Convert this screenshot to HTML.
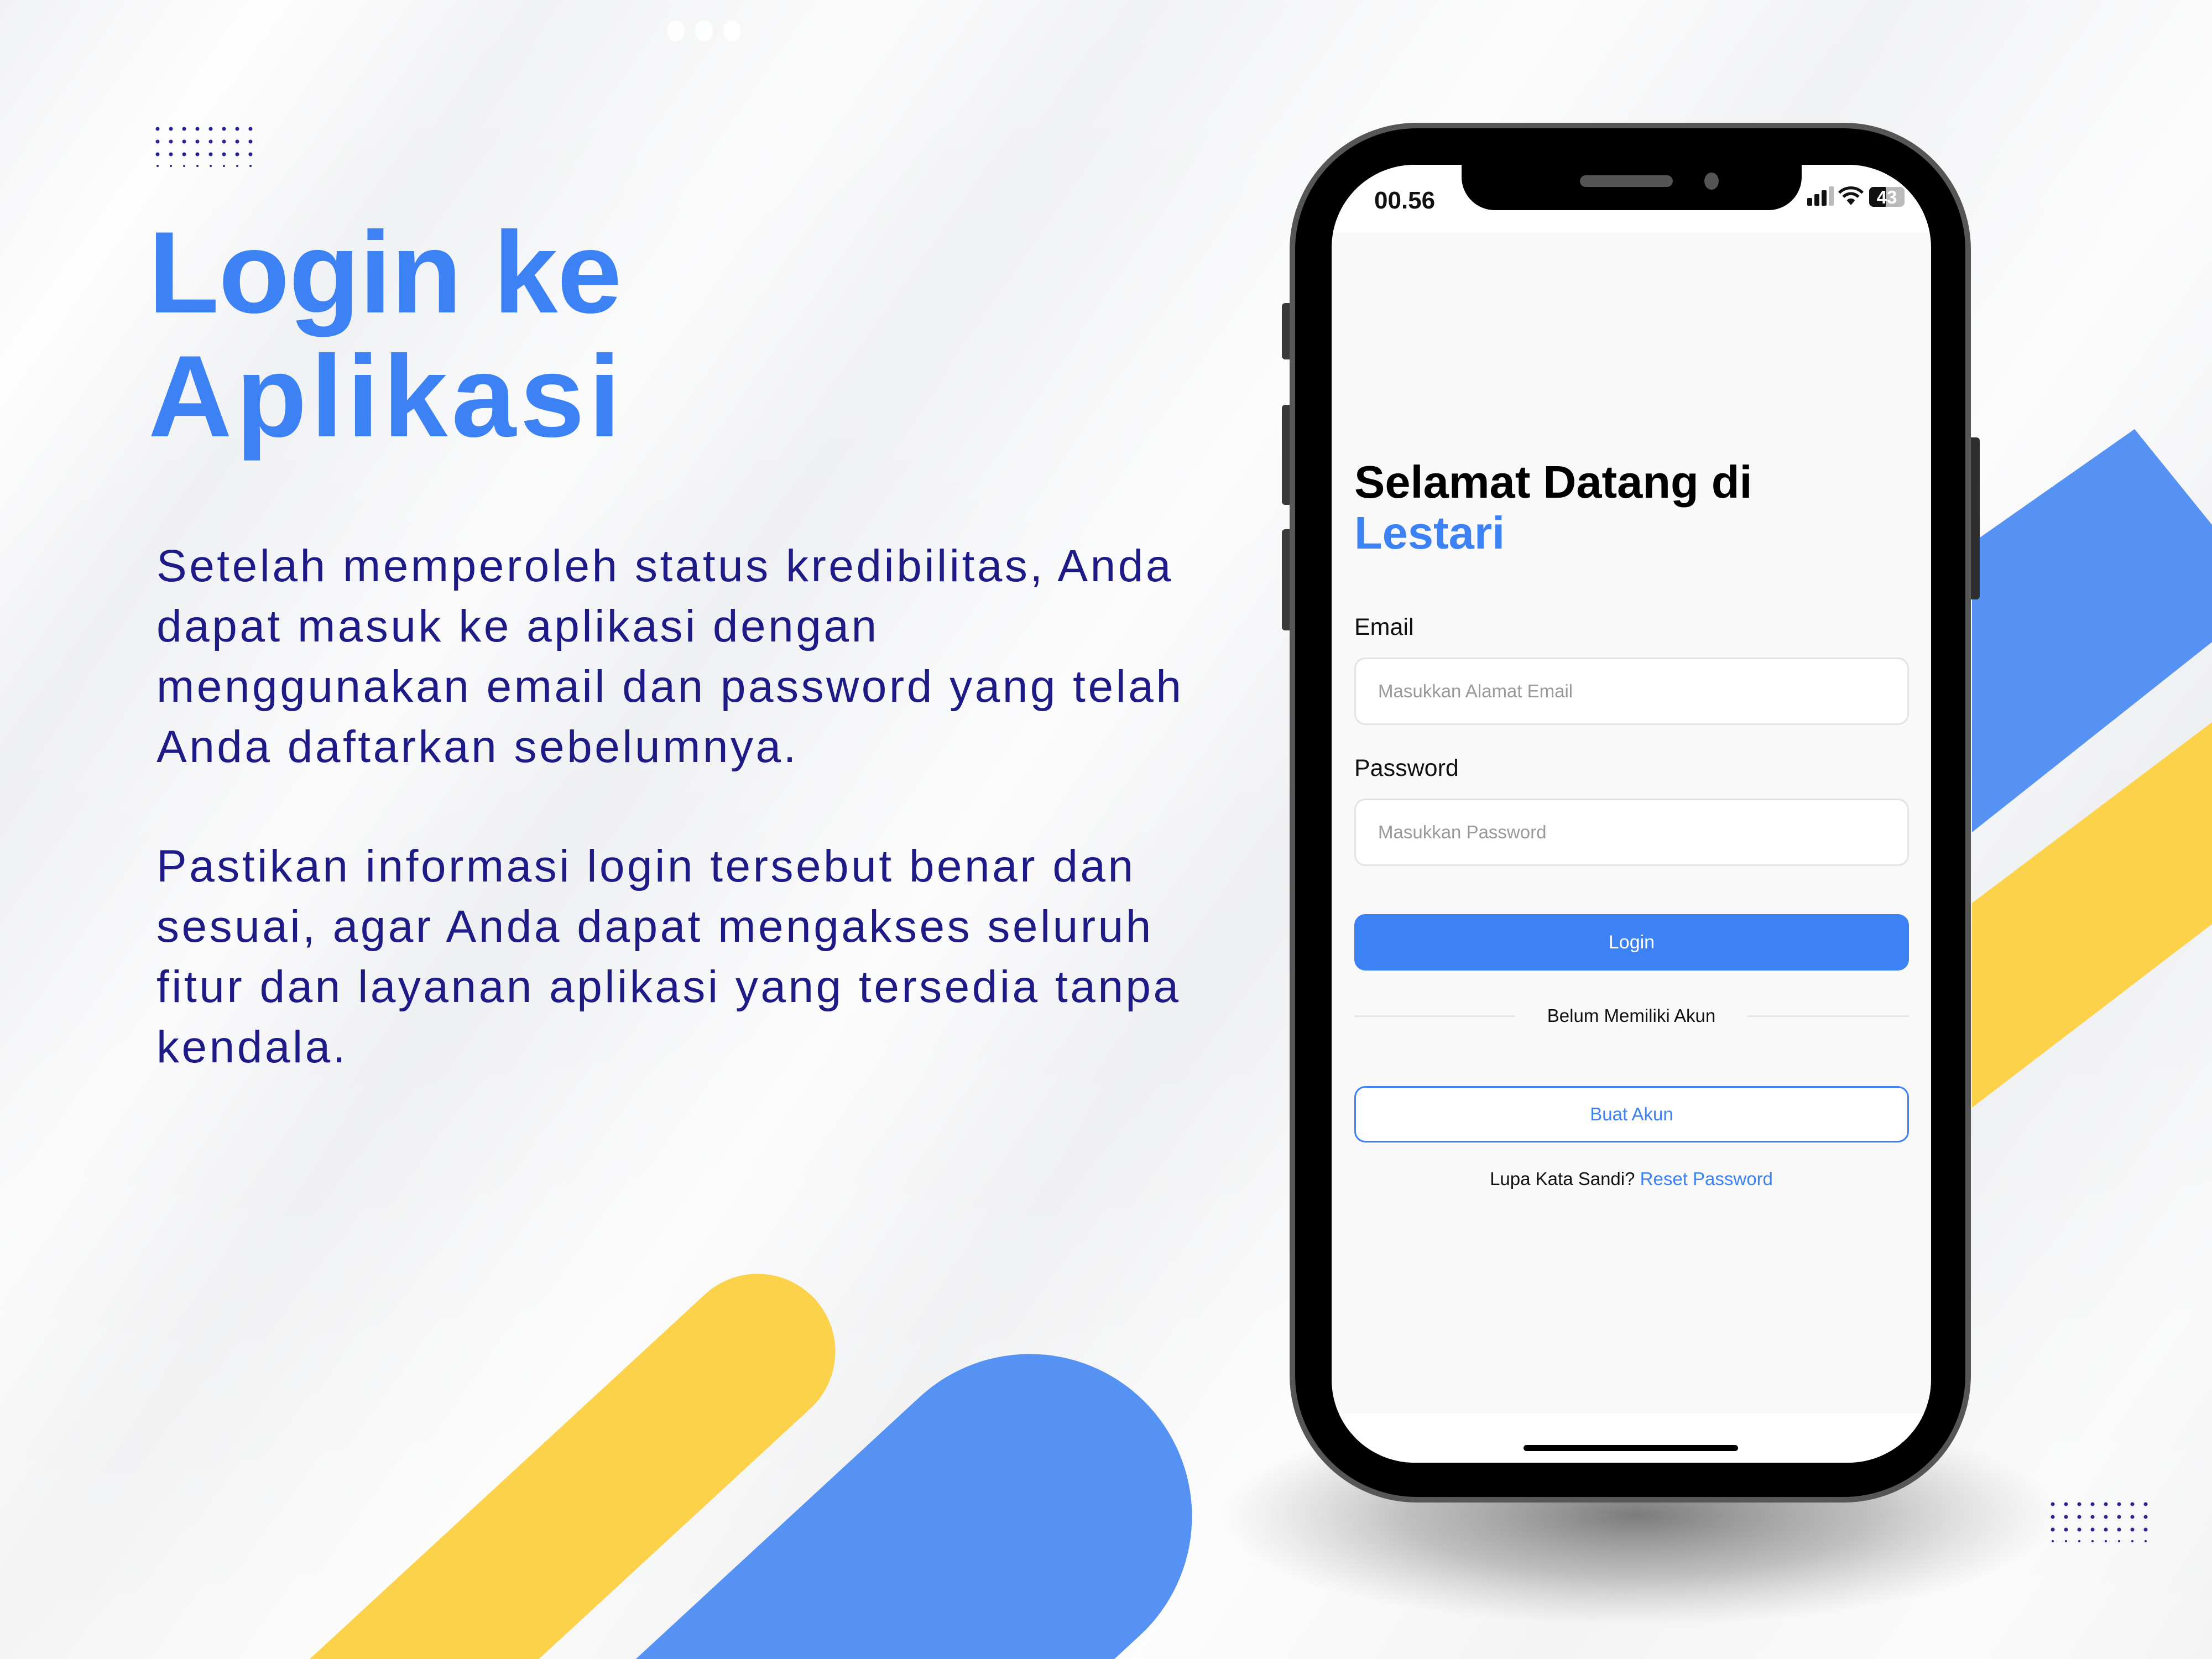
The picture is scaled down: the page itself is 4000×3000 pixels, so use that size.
<!DOCTYPE html>
<html><head><meta charset="utf-8">
<style>
*{margin:0;padding:0;box-sizing:border-box}
html,body{width:4000px;height:3000px;overflow:hidden}
body{position:relative;font-family:"Liberation Sans",sans-serif;
background:
linear-gradient(125deg,rgba(255,255,255,0) 0%,rgba(255,255,255,.9) 8%,rgba(255,255,255,0) 16%,rgba(255,255,255,.7) 26%,rgba(255,255,255,0) 34%,rgba(255,255,255,.8) 46%,rgba(255,255,255,0) 56%,rgba(255,255,255,.8) 68%,rgba(255,255,255,0) 80%,rgba(255,255,255,.6) 92%,rgba(255,255,255,0) 100%),
linear-gradient(180deg,#f1f2f4 0%,#eeeff2 60%,#f4f4f4 100%);}
.abs{position:absolute}
.title{left:268px;font-weight:bold;font-size:210px;color:#3d82f4;line-height:1;letter-spacing:-1px;white-space:nowrap}
.body{left:283px;font-size:82px;line-height:109px;color:#1e1a86;letter-spacing:4.5px;white-space:nowrap}
.screen{font-family:"Liberation Sans",sans-serif}
</style></head><body>

<svg class="abs" style="left:0;top:0" width="4000" height="3000">
 <defs>
  <radialGradient id="sh" cx="50%" cy="50%" r="50%">
   <stop offset="0" stop-color="#666" stop-opacity=".85"/>
   <stop offset=".55" stop-color="#888" stop-opacity=".5"/>
   <stop offset="1" stop-color="#aaa" stop-opacity="0"/>
  </radialGradient>
  <g id="dg" fill="#2a2590">
   <circle cx="0" cy="0" r="3.5"/><circle cx="24" cy="0" r="3.5"/><circle cx="48" cy="0" r="3.5"/><circle cx="72" cy="0" r="3.5"/><circle cx="96" cy="0" r="3.5"/><circle cx="120" cy="0" r="3.5"/><circle cx="144" cy="0" r="3.5"/><circle cx="168" cy="0" r="3.5"/>
   <circle cx="0" cy="23" r="3.5"/><circle cx="24" cy="23" r="3.5"/><circle cx="48" cy="23" r="3.5"/><circle cx="72" cy="23" r="3.5"/><circle cx="96" cy="23" r="3.5"/><circle cx="120" cy="23" r="3.5"/><circle cx="144" cy="23" r="3.5"/><circle cx="168" cy="23" r="3.5"/>
   <circle cx="0" cy="46" r="3.5"/><circle cx="24" cy="46" r="3.5"/><circle cx="48" cy="46" r="3.5"/><circle cx="72" cy="46" r="3.5"/><circle cx="96" cy="46" r="3.5"/><circle cx="120" cy="46" r="3.5"/><circle cx="144" cy="46" r="3.5"/><circle cx="168" cy="46" r="3.5"/>
   <circle cx="0" cy="67" r="2"/><circle cx="24" cy="67" r="2"/><circle cx="48" cy="67" r="2"/><circle cx="72" cy="67" r="2"/><circle cx="96" cy="67" r="2"/><circle cx="120" cy="67" r="2"/><circle cx="144" cy="67" r="2"/><circle cx="168" cy="67" r="2"/>
  </g>
 </defs>
 <polygon points="3566,982 3860,776 4000,949 4000,1161 3566,1505" fill="#5592f3"/>
 <polygon points="3566,1633 4000,1306 4000,1671 3566,2003" fill="#fbd24a"/>
 <line x1="1370" y1="2444" x2="-230" y2="3920" stroke="#fbd24a" stroke-width="281" stroke-linecap="round"/>
 <line x1="1862" y1="2742" x2="900" y2="3630" stroke="#5592f3" stroke-width="587" stroke-linecap="round"/>
 <ellipse cx="2960" cy="2740" rx="760" ry="200" fill="url(#sh)"/>
 <ellipse cx="1222" cy="56" rx="16" ry="19" fill="#fff" opacity=".9"/>
 <ellipse cx="1273" cy="56" rx="16" ry="19" fill="#fff" opacity=".9"/>
 <ellipse cx="1324" cy="56" rx="16" ry="19" fill="#fff" opacity=".9"/>
 <use href="#dg" x="285" y="233"/>
 <use href="#dg" x="3712" y="2720"/>
</svg>

<div class="abs title" style="top:388px">Login ke</div>
<div class="abs title" style="top:612px;letter-spacing:7px">Aplikasi</div>

<div class="abs body" style="top:969px">Setelah memperoleh status kredibilitas, Anda<br>dapat masuk ke aplikasi dengan<br>menggunakan email dan password yang telah<br>Anda daftarkan sebelumnya.</div>
<div class="abs body" style="top:1512px">Pastikan informasi login tersebut benar dan<br>sesuai, agar Anda dapat mengakses seluruh<br>fitur dan layanan aplikasi yang tersedia tanpa<br>kendala.</div>

<div class="abs" style="left:2318px;top:548px;width:20px;height:102px;background:#3a3a3a;border-radius:6px"></div>
<div class="abs" style="left:2318px;top:732px;width:20px;height:181px;background:#3a3a3a;border-radius:6px"></div>
<div class="abs" style="left:2318px;top:957px;width:20px;height:183px;background:#3a3a3a;border-radius:6px"></div>
<div class="abs" style="left:3558px;top:791px;width:22px;height:293px;background:#2e2e2e;border-radius:6px"></div>

<div class="abs" style="left:2332px;top:222px;width:1232px;height:2495px;background:#000;border:10px solid #565656;border-radius:230px"></div>
<div class="abs screen" style="left:2408px;top:298px;width:1084px;height:2347px;background:#f9f9f9;border-radius:150px;overflow:hidden">
 <div class="abs" style="left:0;top:0;width:1084px;height:123px;background:#fff"></div>
 <div class="abs" style="left:0;top:2258px;width:1084px;height:100px;background:#fff"></div>
 <div class="abs" style="left:77px;top:40px;font-size:44px;font-weight:bold;color:#111">00.56</div>
 <div class="abs" style="left:860px;top:60px;width:9px;height:14px;background:#111;border-radius:2px"></div>
 <div class="abs" style="left:873px;top:53px;width:9px;height:21px;background:#111;border-radius:2px"></div>
 <div class="abs" style="left:886px;top:46px;width:9px;height:28px;background:#111;border-radius:2px"></div>
 <div class="abs" style="left:899px;top:39px;width:9px;height:35px;background:#bbb;border-radius:2px"></div>
 <svg class="abs" style="left:915px;top:38px" width="48" height="38" viewBox="0 0 44 36"><path d="M2 12 A28 28 0 0 1 42 12" stroke="#111" stroke-width="5" fill="none"/><path d="M9 19 A18 18 0 0 1 35 19" stroke="#111" stroke-width="5" fill="none"/><path d="M22 33 L15 25 A9 9 0 0 1 29 25 Z" fill="#111"/></svg>
 <div class="abs" style="left:972px;top:40px;width:64px;height:36px;background:#bbb;border-radius:8px;overflow:hidden"><div style="width:30px;height:36px;background:#111"></div></div>
 <div class="abs" style="left:972px;top:40px;width:64px;text-align:center;font-size:33px;font-weight:bold;color:#fff">43</div>

 <div class="abs" style="left:41px;top:528px;font-size:83px;font-weight:bold;color:#000;line-height:92px;white-space:nowrap">Selamat Datang di<br><span style="color:#3d82f4">Lestari</span></div>

 <div class="abs" style="left:41px;top:812px;font-size:43px;color:#111">Email</div>
 <div class="abs" style="left:41px;top:891px;width:1003px;height:122px;background:#fff;border:3px solid #e3e3e3;border-radius:20px"></div>
 <div class="abs" style="left:84px;top:933px;font-size:33px;color:#9a9a9a">Masukkan Alamat Email</div>

 <div class="abs" style="left:41px;top:1067px;font-size:43px;color:#111">Password</div>
 <div class="abs" style="left:41px;top:1146px;width:1003px;height:122px;background:#fff;border:3px solid #e3e3e3;border-radius:20px"></div>
 <div class="abs" style="left:84px;top:1188px;font-size:33px;color:#9a9a9a">Masukkan Password</div>

 <div class="abs" style="left:41px;top:1355px;width:1003px;height:102px;background:#3d82f4;border-radius:20px;color:#fff;font-size:34px;text-align:center;line-height:102px">Login</div>

 <div class="abs" style="left:41px;top:1538px;width:290px;height:3px;background:#e3e3e3"></div>
 <div class="abs" style="left:752px;top:1538px;width:292px;height:3px;background:#e3e3e3"></div>
 <div class="abs" style="left:0;top:1520px;width:1084px;text-align:center;font-size:33px;color:#111">Belum Memiliki Akun</div>

 <div class="abs" style="left:41px;top:1666px;width:1003px;height:102px;background:#fff;border:3px solid #3d82f4;border-radius:20px;color:#3d82f4;font-size:33px;text-align:center;line-height:96px">Buat Akun</div>

 <div class="abs" style="left:0;top:1815px;width:1084px;text-align:center;font-size:33px;color:#111">Lupa Kata Sandi? <span style="color:#3d82f4">Reset Password</span></div>

 <div class="abs" style="left:347px;top:2315px;width:388px;height:11px;background:#000;border-radius:6px"></div>
</div>
<div class="abs" style="left:2643px;top:290px;width:615px;height:90px;background:#000;border-radius:0 0 60px 60px"></div>
<div class="abs" style="left:2857px;top:317px;width:168px;height:21px;background:#555;border-radius:11px"></div>
<div class="abs" style="left:3082px;top:312px;width:26px;height:31px;background:#555;border-radius:50%"></div>

</body></html>
